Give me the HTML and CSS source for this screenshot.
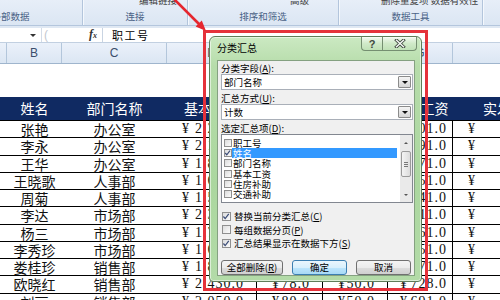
FILE: index.html
```html
<!DOCTYPE html>
<html lang="zh-CN">

<head>
    <meta charset="UTF-8">
    <meta name="viewport" content="width=device-width, initial-scale=1.0">
    <title>分类汇总</title>
    <link rel="stylesheet" href="styles.css">
</head>

<body>
    <div class="app">
        <div class="ribbon">
            <div class="group g1">
                <div class="cmds"></div>
                <div class="glabel">获取外部数据</div>
            </div>
            <div class="group g2">
                <div class="cmds">编辑链接</div>
                <div class="glabel">连接</div>
            </div>
            <div class="group g3">
                <div class="cmds">高级</div>
                <div class="glabel">排序和筛选</div>
            </div>
            <div class="group g4">
                <div class="cmds">删除重复项 数据有效性</div>
                <div class="glabel">数据工具</div>
            </div>
            <div class="group g5">
                <div class="cmds"></div>
                <div class="glabel">分级显示</div>
            </div>
        </div>

        <div class="formula">
            <div class="namebox"><span class="drop"></span></div>
            <div class="fxarea">
                <span class="grip">(</span>
                <span class="fx"><i>f</i><small>x</small></span>
            </div>
            <div class="input">职工号</div>
        </div>

        <div class="colhead cols">
            <div></div>
            <div>B</div>
            <div>C</div>
            <div>D</div>
            <div>E</div>
            <div>F</div>
            <div>G</div>
            <div>H</div>
        </div>

        <div class="sheet">
            <div class="blank"></div>
            <div class="thead cols">
                <div></div>
                <div>姓名</div>
                <div>部门名称</div>
                <div>基本工资</div>
                <div>住房补助</div>
                <div>交通补助</div>
                <div>应发工资</div>
                <div>实发工资</div>
            </div>
            <div class="row cols">
                <div></div><div>张艳</div><div>办公室</div>
                <div class="m"><span>¥</span><span>2,250.0</span></div>
                <div class="m"><span>¥</span><span>80.0</span></div>
                <div class="m"><span>¥</span><span>50.0</span></div>
                <div class="m g"><span>¥</span><span>701.0</span></div>
                <div class="m"><span>¥</span><span>2,079.0</span></div>
            </div>
            <div class="row cols">
                <div></div><div>李永</div><div>办公室</div>
                <div class="m"><span>¥</span><span>2,100.0</span></div>
                <div class="m"><span>¥</span><span>80.0</span></div>
                <div class="m"><span>¥</span><span>50.0</span></div>
                <div class="m g"><span>¥</span><span>691.0</span></div>
                <div class="m"><span>¥</span><span>1,939.0</span></div>
            </div>
            <div class="row cols">
                <div></div><div>王华</div><div>办公室</div>
                <div class="m"><span>¥</span><span>1,850.0</span></div>
                <div class="m"><span>¥</span><span>78.0</span></div>
                <div class="m"><span>¥</span><span>50.0</span></div>
                <div class="m g"><span>¥</span><span>671.0</span></div>
                <div class="m"><span>¥</span><span>1,707.0</span></div>
            </div>
            <div class="row cols">
                <div></div><div>王晓歌</div><div>人事部</div>
                <div class="m"><span>¥</span><span>1,600.0</span></div>
                <div class="m"><span>¥</span><span>78.0</span></div>
                <div class="m"><span>¥</span><span>50.0</span></div>
                <div class="m g"><span>¥</span><span>651.0</span></div>
                <div class="m"><span>¥</span><span>1,477.0</span></div>
            </div>
            <div class="row cols">
                <div></div><div>周菊</div><div>人事部</div>
                <div class="m"><span>¥</span><span>1,550.0</span></div>
                <div class="m"><span>¥</span><span>78.0</span></div>
                <div class="m"><span>¥</span><span>50.0</span></div>
                <div class="m g"><span>¥</span><span>641.0</span></div>
                <div class="m"><span>¥</span><span>1,437.0</span></div>
            </div>
            <div class="row cols">
                <div></div><div>李达</div><div>市场部</div>
                <div class="m"><span>¥</span><span>2,300.0</span></div>
                <div class="m"><span>¥</span><span>80.0</span></div>
                <div class="m"><span>¥</span><span>50.0</span></div>
                <div class="m g"><span>¥</span><span>711.0</span></div>
                <div class="m"><span>¥</span><span>2,119.0</span></div>
            </div>
            <div class="row cols">
                <div></div><div>杨三</div><div>市场部</div>
                <div class="m"><span>¥</span><span>1,700.0</span></div>
                <div class="m"><span>¥</span><span>78.0</span></div>
                <div class="m"><span>¥</span><span>50.0</span></div>
                <div class="m g"><span>¥</span><span>661.0</span></div>
                <div class="m"><span>¥</span><span>1,567.0</span></div>
            </div>
            <div class="row cols">
                <div></div><div>李秀珍</div><div>市场部</div>
                <div class="m"><span>¥</span><span>1,650.0</span></div>
                <div class="m"><span>¥</span><span>78.0</span></div>
                <div class="m"><span>¥</span><span>50.0</span></div>
                <div class="m g"><span>¥</span><span>651.0</span></div>
                <div class="m"><span>¥</span><span>1,527.0</span></div>
            </div>
            <div class="row cols">
                <div></div><div>娄桂珍</div><div>销售部</div>
                <div class="m"><span>¥</span><span>1,800.0</span></div>
                <div class="m"><span>¥</span><span>78.0</span></div>
                <div class="m"><span>¥</span><span>50.0</span></div>
                <div class="m g"><span>¥</span><span>671.0</span></div>
                <div class="m"><span>¥</span><span>1,657.0</span></div>
            </div>
            <div class="row cols">
                <div></div><div>欧晓红</div><div>销售部</div>
                <div class="m"><span>¥</span><span>2,430.0</span></div>
                <div class="m"><span>¥</span><span>78.0</span></div>
                <div class="m"><span>¥</span><span>50.0</span></div>
                <div class="m g"><span>¥</span><span>728.0</span></div>
                <div class="m"><span>¥</span><span>2,230.0</span></div>
            </div>
            <div class="row cols">
                <div></div><div>刘丽</div><div>销售部</div>
                <div class="m"><span>¥</span><span>2,050.0</span></div>
                <div class="m"><span>¥</span><span>80.0</span></div>
                <div class="m"><span>¥</span><span>50.0</span></div>
                <div class="m g"><span>¥</span><span>691.0</span></div>
                <div class="m"><span>¥</span><span>1,889.0</span></div>
            </div>
        </div>

        <!-- red frame and arrow drawn over the sheet -->
        <div class="redbox"></div>
        <svg class="arrow" width="500" height="300" viewBox="0 0 500 300">
            <line x1="173" y1="-2" x2="199" y2="24" stroke="#e5262e" stroke-width="2.6" />
            <polygon points="206,31 195.6,26.6 201.8,20.4" fill="#e5262e" />
        </svg>

        <div class="dialog">
            <div class="titlebar">
                <span class="title">分类汇总</span>
                <div class="caption">
                    <span class="cbtn help">?</span>
                    <span class="cbtn close">
                        <svg width="12" height="9" viewBox="0 0 12 9">
                            <path d="M2.5 1.2 L9.5 7.8 M9.5 1.2 L2.5 7.8" stroke="#3f4a3f" stroke-width="3.2" stroke-linecap="square" />
                            <path d="M2.5 1.2 L9.5 7.8 M9.5 1.2 L2.5 7.8" stroke="#f7faf7" stroke-width="1.4" stroke-linecap="square" />
                        </svg>
                    </span>
                </div>
            </div>
            <div class="client">
                <div class="lbl">分类字段(<u>A</u>):</div>
                <div class="combo"><span>部门名称</span><span class="dd"></span></div>
                <div class="lbl">汇总方式(<u>U</u>):</div>
                <div class="combo"><span>计数</span><span class="dd"></span></div>
                <div class="lbl">选定汇总项(<u>D</u>):</div>
                <div class="listbox">
                    <div class="items">
                        <div class="item"><span class="cb"></span><span class="txt">职工号</span></div>
                        <div class="item sel">
                            <span class="cb"><svg width="8" height="8" viewBox="0 0 8 8"><path d="M1.4 4 L3.2 6 L6.8 1.4" stroke="#3b4c77" stroke-width="1.3" fill="none" /></svg></span>
                            <span class="txt">姓名</span>
                        </div>
                        <div class="item"><span class="cb"></span><span class="txt">部门名称</span></div>
                        <div class="item"><span class="cb"></span><span class="txt">基本工资</span></div>
                        <div class="item"><span class="cb"></span><span class="txt">住房补助</span></div>
                        <div class="item"><span class="cb"></span><span class="txt">交通补助</span></div>
                    </div>
                    <div class="scroll">
                        <div class="sbtn"><span class="up"></span></div>
                        <div class="track"><div class="thumb"><span></span><span></span><span></span></div></div>
                        <div class="sbtn"><span class="down"></span></div>
                    </div>
                </div>
                <div class="checks">
                    <div class="chk">
                        <span class="cb big"><svg width="9" height="9" viewBox="0 0 9 9"><path d="M1.6 4.5 L3.6 6.8 L7.6 1.6" stroke="#3b4c77" stroke-width="1.4" fill="none" /></svg></span>
                        替换当前分类汇总(<u>C</u>)
                    </div>
                    <div class="chk"><span class="cb big"></span>每组数据分页(<u>P</u>)</div>
                    <div class="chk">
                        <span class="cb big"><svg width="9" height="9" viewBox="0 0 9 9"><path d="M1.6 4.5 L3.6 6.8 L7.6 1.6" stroke="#3b4c77" stroke-width="1.4" fill="none" /></svg></span>
                        汇总结果显示在数据下方(<u>S</u>)
                    </div>
                </div>
                <div class="btns">
                    <button class="btn wide">全部删除(<u>R</u>)</button>
                    <button class="btn default">确定</button>
                    <button class="btn">取消</button>
                </div>
            </div>
        </div>
    </div>
</body>

</html>
```

FILE: styles.css
```css
* {
    box-sizing: border-box;
}

body {
    margin: 0;
    width: 500px;
    height: 300px;
    overflow: hidden;
    background: #fff;
    font-family: "Noto Sans CJK SC", sans-serif;
}

.app {
    position: relative;
    width: 500px;
    height: 300px;
    overflow: hidden;
}

/* ribbon */
.ribbon {
    display: flex;
    height: 26px;
    overflow: hidden;
    background: linear-gradient(#e7eef8, #dbe6f3);
    border-bottom: 1px solid #b4c6dd;
}

.group {
    flex-shrink: 0;
    display: flex;
    flex-direction: column;
    justify-content: space-between;
    border-right: 1px solid #b3c5dc;
    box-shadow: 1px 0 0 #f4f8fd;
}

.g1 {
    width: 163px;
    margin-left: -80px;
}

.g2 {
    width: 105px;
}

.g3 {
    width: 151px;
}

.g4 {
    width: 144px;
}

.g5 {
    width: 120px;
}

.cmds {
    height: 8px;
    margin-top: -6px;
    font-size: 9.5px;
    line-height: 12px;
    color: #444;
    white-space: nowrap;
}

.g2 .cmds {
    padding-left: 56px;
}

.g3 .cmds {
    padding-left: 102px;
}

.g4 .cmds {
    padding-left: 42px;
}

.glabel {
    padding-bottom: 3px;
    font-size: 9.5px;
    line-height: 12px;
    text-align: center;
    color: #4a6286;
    white-space: nowrap;
}

/* formula bar */
.formula {
    display: flex;
    height: 17px;
    padding-top: 2px;
    background: #dfe8f3;
    border-bottom: 1px solid #c2d0e1;
}

.namebox {
    width: 41px;
    display: flex;
    align-items: center;
    justify-content: flex-end;
    padding-right: 5px;
    background: #fff;
}

.drop {
    width: 0;
    height: 0;
    border-left: 3px solid transparent;
    border-right: 3px solid transparent;
    border-top: 3px solid #333;
}

.fxarea {
    width: 61px;
    display: flex;
    align-items: center;
    padding: 0 5px 0 2px;
    background: #fff;
    border-left: 1px solid #d3dce8;
}

.grip {
    font-family: "Liberation Sans", sans-serif;
    font-size: 12px;
    line-height: 12px;
    color: #c2c8d0;
}

.fx {
    margin-left: auto;
    font-family: "Liberation Serif", serif;
    font-size: 12px;
    font-weight: bold;
    line-height: 12px;
    color: #333;
}

.fx small {
    font-size: 8px;
    font-style: italic;
}

.input {
    flex: 1;
    padding-left: 9px;
    background: #fff;
    border-left: 1px solid #c9d4e2;
    font-size: 11px;
    line-height: 14px;
    letter-spacing: 1.5px;
    color: #000;
}

/* sheet */
.cols {
    display: grid;
    grid-template-columns: 7px 55px 105px 90px 66px 65px 65px 116px;
    width: 569px;
}

.colhead {
    height: 21px;
    background: linear-gradient(#ebf1fa, #dbe6f3);
    border-bottom: 1px solid #9fb5cd;
}

.colhead div {
    border-right: 1px solid #b3c6db;
    font-family: "Liberation Sans", sans-serif;
    font-size: 12px;
    line-height: 20px;
    text-align: center;
    color: #3b4e6b;
}

.blank {
    height: 33px;
}

.thead {
    height: 24px;
    background: #102a62;
    border-bottom: 1px solid #000;
}

.thead div {
    font-size: 14px;
    line-height: 23px;
    text-align: center;
    color: #fff;
    white-space: nowrap;
}

.row {
    height: 17.25px;
    border-bottom: 1px solid #000;
}

.row div {
    font-size: 14px;
    line-height: 16px;
    text-align: center;
    color: #111;
    white-space: nowrap;
}

.row .m {
    display: flex;
    justify-content: space-between;
    padding: 0 12px 0 15px;
    border-right: 1px solid #000;
    font-family: "Liberation Serif", serif;
    letter-spacing: 1px;
}

.row .g {
    padding: 0 5px 0 12px;
}

/* overlays */
.redbox {
    position: absolute;
    left: 203px;
    top: 30px;
    width: 225px;
    height: 261px;
    border: 3px solid #e5323b;
}

.arrow {
    position: absolute;
    left: 0;
    top: 0;
}

/* dialog */
.dialog {
    position: absolute;
    left: 209px;
    top: 36px;
    width: 213px;
    height: 246px;
    display: flex;
    flex-direction: column;
    padding: 0 6px 5px 7px;
    background: linear-gradient(#cbe9c2, #b6dcaa 12%, #abd79f 60%, #b3dba8);
    border: 1px solid #5e7d59;
    border-radius: 6px 6px 4px 4px;
    box-shadow: inset 0 0 0 1px rgba(255, 255, 255, 0.55);
    font-size: 9.5px;
    color: #000;
}

.titlebar {
    height: 23px;
    display: flex;
    align-items: flex-start;
}

.title {
    padding-top: 5px;
    font-size: 10px;
    line-height: 12px;
}

.caption {
    display: flex;
    margin-left: auto;
    margin-right: -2px;
}

.cbtn {
    height: 14px;
    display: flex;
    align-items: center;
    justify-content: center;
    border: 1px solid #758f71;
    border-top: none;
    background: linear-gradient(rgba(255, 255, 255, 0.75), rgba(214, 236, 208, 0.6) 50%, rgba(190, 224, 182, 0.6));
}

.help {
    width: 21px;
    border-radius: 0 0 0 4px;
    border-right: none;
    font-family: "Liberation Sans", sans-serif;
    font-size: 11px;
    font-weight: bold;
    color: #3f4a3f;
}

.close {
    width: 35px;
    border-radius: 0 0 4px 0;
}

.client {
    flex: 1;
    padding: 1px 1px 0 3px;
    background: #f0f0f0;
    border: 1px solid #85a181;
}

.lbl {
    height: 12px;
    line-height: 12px;
    white-space: nowrap;
}

.combo {
    height: 16px;
    display: flex;
    align-items: center;
    padding-left: 2px;
    background: #fff;
    border: 1px solid #a9afb8;
    line-height: 12px;
}

.combo+.lbl {
    margin-top: 2px;
}

.combo .dd {
    margin-left: auto;
    margin-right: 1px;
    width: 13px;
    height: 12px;
    display: flex;
    align-items: center;
    justify-content: center;
    background: linear-gradient(#f4f4f4, #d6d6d6);
    border: 1px solid #8b8b8b;
    border-radius: 1px;
}

.combo .dd::after {
    content: "";
    border-left: 3px solid transparent;
    border-right: 3px solid transparent;
    border-top: 3px solid #111;
}

.listbox {
    height: 69px;
    display: flex;
    background: #fff;
    border: 1px solid #828790;
}

.items {
    flex: 1;
    padding-top: 3px;
}

.item {
    height: 10.2px;
    display: flex;
    align-items: center;
    padding-left: 2px;
    line-height: 10px;
}

.item .txt {
    flex: 1;
    height: 10px;
    margin-right: 3px;
    padding-left: 1px;
}

.item.sel .txt {
    background: #3399ff;
    color: #fff;
}

.cb {
    width: 8px;
    height: 8px;
    flex-shrink: 0;
    display: flex;
    background: linear-gradient(135deg, #dcdcdc, #fbfbfb);
    border: 1px solid #8f8f8f;
}

.cb svg {
    margin: -1px 0 0 -1px;
}

.scroll {
    width: 12px;
    display: flex;
    flex-direction: column;
    background: #eaeaea;
}

.sbtn {
    height: 15px;
    display: flex;
    align-items: center;
    justify-content: center;
}

.up {
    border-left: 2.5px solid transparent;
    border-right: 2.5px solid transparent;
    border-bottom: 2.5px solid #555;
}

.down {
    border-left: 2.5px solid transparent;
    border-right: 2.5px solid transparent;
    border-top: 2.5px solid #555;
}

.track {
    flex: 1;
    padding-top: 1px;
}

.thumb {
    height: 26px;
    margin: 0 1px;
    display: flex;
    flex-direction: column;
    align-items: center;
    justify-content: center;
    gap: 1px;
    background: linear-gradient(90deg, #f4f4f4, #dcdcdc);
    border: 1px solid #9a9a9a;
    border-radius: 2px;
}

.thumb span {
    width: 4px;
    height: 1px;
    background: #777;
}

.checks {
    margin-top: 6.5px;
}

.chk {
    height: 13.5px;
    display: flex;
    align-items: center;
    padding-left: 1px;
    line-height: 12px;
    white-space: nowrap;
}

.cb.big {
    width: 9px;
    height: 9px;
    margin-right: 3px;
}

.btns {
    display: flex;
    gap: 9px;
    margin-top: 9.5px;
}

.btn {
    width: 55px;
    height: 15px;
    padding: 0;
    font-family: "Noto Sans CJK SC", sans-serif;
    font-size: 9.5px;
    line-height: 12px;
    color: #000;
    background: linear-gradient(#f4f4f4, #ebebeb 50%, #dddddd 51%, #cfcfcf);
    border: 1px solid #707070;
    border-radius: 3px;
}

.btn.wide {
    width: 62px;
}

.btn.default {
    background: linear-gradient(#eaf6fd, #d9f0fc 50%, #bee6fd 51%, #a7d9f5);
    border-color: #3c7fb1;
}
```
